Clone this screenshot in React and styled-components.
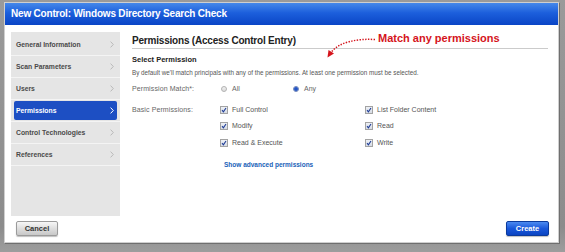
import React from "react";
import styled, { createGlobalStyle } from "styled-components";

const Global = createGlobalStyle`
  html, body { margin: 0; padding: 0; background: #8c8c8c; }
  body { font-family: "Liberation Sans", Arial, sans-serif; }
`;

const Frame = styled.div`
  width: 565px;
  height: 252px;
  box-sizing: border-box;
  padding: 3px 7px 10px 5px;
  background: linear-gradient(to bottom, #9a9a9a 0%, #8c8c8c 90%, #9d9d9d 100%);
  display: flex;
`;

const Dialog = styled.div`
  flex: 1;
  display: flex;
  flex-direction: column;
  background: #fff;
  box-shadow: 0 0 0 1px #cfcfcf, 1px 1px 0 1px #6f6f6f;
`;

const TitleBar = styled.div`
  height: 22px;
  line-height: 22px;
  padding-left: 6px;
  color: #fff;
  font-weight: bold;
  font-size: 10px;
  letter-spacing: -0.2px;
  background: linear-gradient(to bottom, #4588ea 0%, #1c5fdc 45%, #0a45c6 100%);
`;

const Body = styled.div`
  flex: 1;
  display: grid;
  grid-template-columns: 109px 1fr;
  grid-template-rows: 184px auto;
  column-gap: 12px;
  padding: 7px 9px 6px 6px;
`;

const Sidebar = styled.nav`
  background: #e5e5e5;
  padding-top: 2px;
  display: flex;
  flex-direction: column;
`;

const NavRow = styled.div`
  height: 22px;
  padding: 1px 3px;
  box-sizing: border-box;
  border-bottom: 1px solid #f4f4f4;
  display: flex;
`;

const NavItem = styled.div`
  flex: 1;
  display: flex;
  align-items: center;
  justify-content: space-between;
  padding: 0 3px 0 2px;
  border-radius: 2px;
  font-size: 6.8px;
  font-weight: bold;
  color: ${(p) => (p.$active ? "#fff" : "#4a4a4a")};
  background: ${(p) => (p.$active ? "#1d4fc3" : "transparent")};
`;

const Chevron = ({ color }) => (
  <svg width="4" height="7" viewBox="0 0 4 7">
    <path d="M0.6 0.6 L3.3 3.5 L0.6 6.4" fill="none" stroke={color} strokeWidth="1" />
  </svg>
);

const Main = styled.section`
  padding-top: 3px;
  display: flex;
  flex-direction: column;
  color: #5a5a5a;
`;

const Header = styled.div`
  position: relative;
  margin-right: 1px;
`;

const PageTitle = styled.h2`
  margin: 0;
  font-size: 10px;
  line-height: 12px;
  letter-spacing: -0.2px;
  font-weight: bold;
  color: #222;
  padding-bottom: 1px;
  border-bottom: 1px solid #cbcbcb;
`;

const Callout = styled.div`
  position: absolute;
  left: 246px;
  top: -3px;
  font-size: 11px;
  line-height: 13px;
  font-weight: bold;
  color: #d5141c;
  white-space: nowrap;
`;

const CalloutArrow = styled.svg`
  position: absolute;
  left: 193px;
  top: 2px;
`;

const SubHeading = styled.h3`
  margin: 5.5px 0 0;
  font-size: 7.5px;
  line-height: 9px;
  font-weight: bold;
  color: #222;
`;

const Description = styled.p`
  margin: 5px 0 0;
  font-size: 6.3px;
  line-height: 8px;
  color: #555;
  white-space: nowrap;
`;

const FormRow = styled.div`
  display: flex;
  margin-top: ${(p) => p.$mt}px;
`;

const Label = styled.div`
  width: 88px;
  font-size: 7px;
  line-height: 10px;
  color: #666;
  letter-spacing: 0.1px;
`;

const RadioGroup = styled.div`
  display: flex;
  margin-left: 1px;
`;

const RadioOption = styled.label`
  width: 72px;
  display: flex;
  align-items: center;
  gap: 5px;
  font-size: 7px;
  line-height: 10px;
  color: #666;
`;

const RadioDot = styled.span`
  width: 6px;
  height: 6px;
  box-sizing: border-box;
  border-radius: 50%;
  border: 1px solid ${(p) => (p.$checked ? "#6c83b8" : "#b2b2b2")};
  background: ${(p) =>
    p.$checked
      ? "radial-gradient(circle, #1f4fc0 0%, #2b5dcc 55%, #c9d4ea 100%)"
      : "linear-gradient(#f2f2f2, #dcdcdc)"};
`;

const CheckGrid = styled.div`
  display: grid;
  grid-template-columns: 145px 145px;
  grid-auto-flow: column;
  grid-template-rows: repeat(3, 10px);
  row-gap: 6.5px;
`;

const CheckOption = styled.label`
  display: flex;
  align-items: center;
  gap: 4px;
  font-size: 7px;
  line-height: 10px;
  color: #555;
`;

const Box = styled.span`
  width: 8px;
  height: 8px;
  box-sizing: border-box;
  border: 1px solid #a3a3a3;
  background: linear-gradient(#eef1f6, #d6dbe4);
  display: flex;
  align-items: center;
  justify-content: center;
`;

const Check = () => (
  <Box>
    <svg width="6" height="6" viewBox="0 0 6 6">
      <path d="M1 3.2 L2.4 4.8 L5 1" fill="none" stroke="#1e3c96" strokeWidth="1.1" />
    </svg>
  </Box>
);

const AdvancedLink = styled.a`
  margin: 13px 0 0 92px;
  font-size: 6.5px;
  line-height: 8px;
  font-weight: bold;
  color: #2061b8;
  text-decoration: none;
`;

const Footer = styled.div`
  grid-column: 1 / -1;
  margin-top: 5px;
  display: flex;
  justify-content: space-between;
  align-items: center;
`;

const Button = styled.button`
  height: 15px;
  padding: 0;
  width: ${(p) => p.$w}px;
  margin-left: ${(p) => p.$ml || 0}px;
  border-radius: 2px;
  font-family: "Liberation Sans", Arial, sans-serif;
  font-size: 7.5px;
  font-weight: bold;
  border: 1px solid ${(p) => (p.$primary ? "#0b3a9c" : "#9b9b9b")};
  color: ${(p) => (p.$primary ? "#fff" : "#333")};
  background: ${(p) =>
    p.$primary
      ? "linear-gradient(#4b8af0, #1a58da 50%, #0b44c2)"
      : "linear-gradient(#f7f7f7, #dedede 50%, #c8c8c8)"};
  box-shadow: 0 1px 1px rgba(0, 0, 0, 0.25);
`;

const navItems = [
  "General Information",
  "Scan Parameters",
  "Users",
  "Permissions",
  "Control Technologies",
  "References",
];

export default function App() {
  return (
    <>
      <Global />
      <Frame>
        <Dialog>
          <TitleBar>New Control: Windows Directory Search Check</TitleBar>
          <Body>
            <Sidebar>
              {navItems.map((item) => {
                const active = item === "Permissions";
                return (
                  <NavRow key={item}>
                    <NavItem $active={active}>
                      <span>{item}</span>
                      <Chevron color={active ? "#fff" : "#b9b9b9"} />
                    </NavItem>
                  </NavRow>
                );
              })}
            </Sidebar>
            <Main>
              <Header>
                <PageTitle>Permissions (Access Control Entry)</PageTitle>
                <CalloutArrow width="52" height="22" viewBox="0 0 52 22">
                  <path
                    d="M50 2.5 C 32 1.5, 14 5, 6.5 15"
                    fill="none"
                    stroke="#d5141c"
                    strokeWidth="1.5"
                    strokeDasharray="1.4 1.4"
                  />
                  <path d="M2.5 20.5 L3.5 13 L9 16.5 Z" fill="#d5141c" />
                </CalloutArrow>
                <Callout>Match any permissions</Callout>
              </Header>
              <SubHeading>Select Permission</SubHeading>
              <Description>
                By default we'll match principals with any of the permissions. At least one permission must be selected.
              </Description>
              <FormRow $mt={7}>
                <Label>Permission Match*:</Label>
                <RadioGroup>
                  <RadioOption>
                    <RadioDot />
                    All
                  </RadioOption>
                  <RadioOption>
                    <RadioDot $checked />
                    Any
                  </RadioOption>
                </RadioGroup>
              </FormRow>
              <FormRow $mt={11}>
                <Label>Basic Permissions:</Label>
                <CheckGrid>
                  {["Full Control", "Modify", "Read & Execute", "List Folder Content", "Read", "Write"].map((p) => (
                    <CheckOption key={p}>
                      <Check />
                      {p}
                    </CheckOption>
                  ))}
                </CheckGrid>
              </FormRow>
              <AdvancedLink href="#">Show advanced permissions</AdvancedLink>
            </Main>
            <Footer>
              <Button $w={42} $ml={5}>Cancel</Button>
              <Button $w={43} $primary>Create</Button>
            </Footer>
          </Body>
        </Dialog>
      </Frame>
    </>
  );
}
